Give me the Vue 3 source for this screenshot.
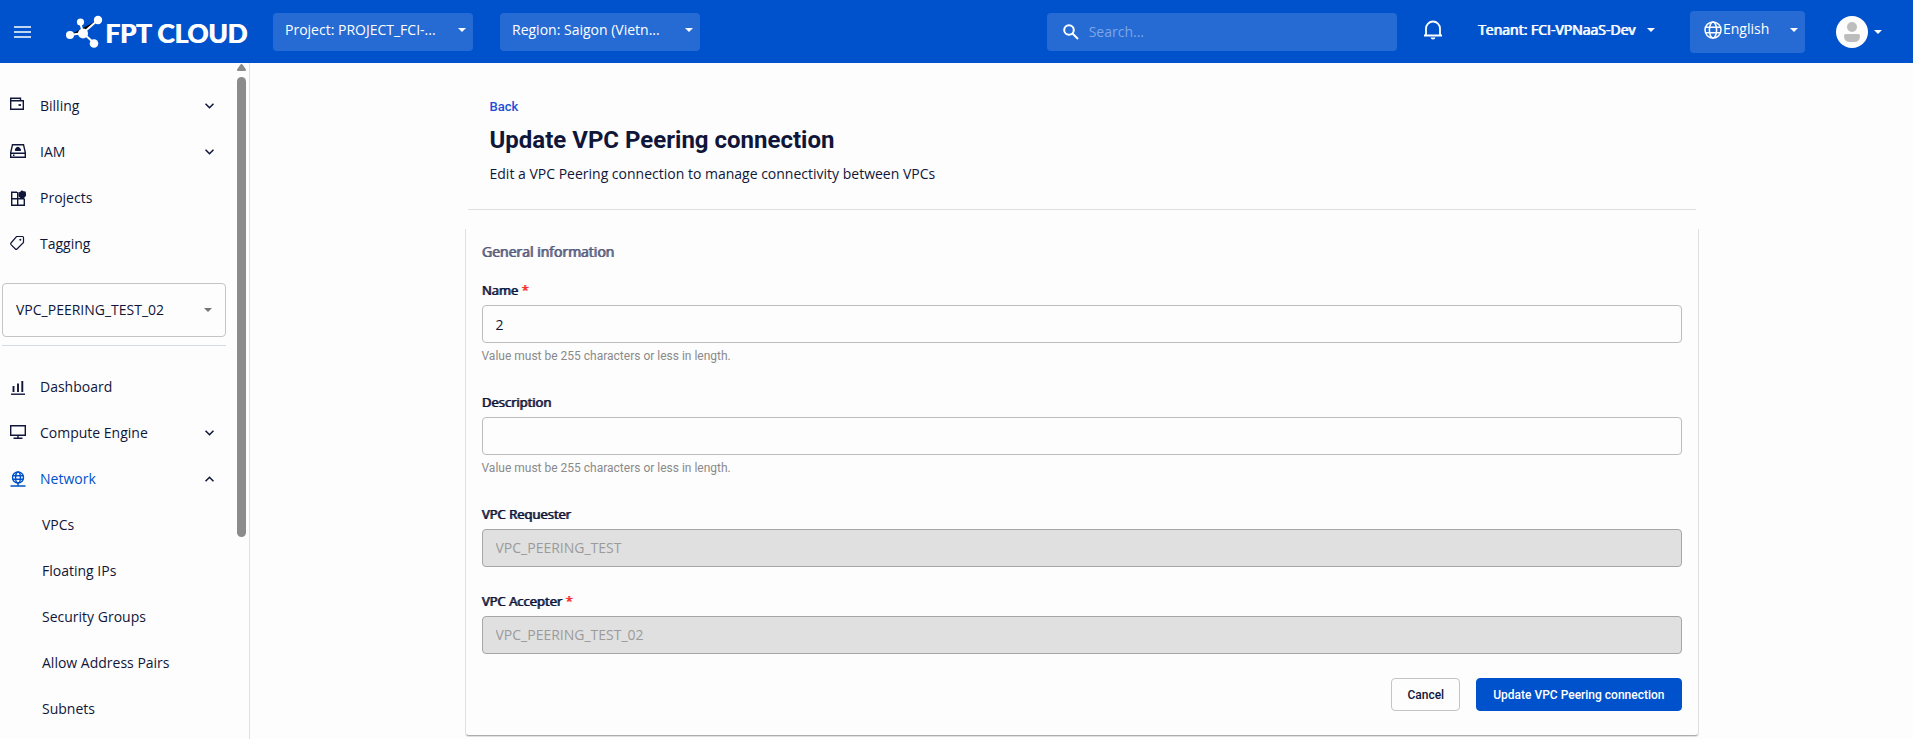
<script setup>
import { ref } from 'vue'

const accountItems = [
  { label: 'Billing', icon: 'wallet', expandable: true },
  { label: 'IAM', icon: 'drive', expandable: true },
  { label: 'Projects', icon: 'grid' },
  { label: 'Tagging', icon: 'tag' }
]
const serviceItems = [
  { label: 'Dashboard', icon: 'chart' },
  { label: 'Compute Engine', icon: 'monitor', expandable: true },
  {
    label: 'Network',
    icon: 'network',
    expandable: true,
    open: true,
    children: ['VPCs', 'Floating IPs', 'Security Groups', 'Allow Address Pairs', 'Subnets']
  }
]
const menus = [accountItems, serviceItems]
const name = ref('2')
const description = ref('')
const keyword = ref('')
</script>

<template>
  <div class="app">
    <header class="topbar">
      <button class="plain burger" type="button" aria-label="Toggle menu">
        <svg width="17" height="12" viewBox="0 0 17 12"><path d="M0 1h17M0 6h17M0 11h17" stroke="#fff" stroke-width="1.7" /></svg>
      </button>
      <a class="logo" href="#">
        <svg width="38" height="34" viewBox="0 0 38 34">
          <path d="M4 20 17 18 32 5M17 18 14 7M17 18l11 10" stroke="#fff" stroke-width="2" />
          <g fill="#fff">
            <circle cx="4" cy="20" r="4" /><circle cx="17" cy="18.500" r="5" /><circle cx="14.500" cy="7" r="3.600" />
            <circle cx="32" cy="5" r="4.200" /><circle cx="28" cy="28.500" r="4.300" />
          </g>
        </svg>
        <span>FPT CLOUD</span>
      </a>
      <div class="picker project">
        <select aria-label="Project"><option>Project: PROJECT_FCI-...</option></select>
        <i class="caret"></i>
      </div>
      <div class="picker region">
        <select aria-label="Region"><option>Region: Saigon (Vietn...</option></select>
        <i class="caret"></i>
      </div>
      <label class="search">
        <svg width="16" height="16" viewBox="0 0 16 16" fill="none" stroke="#fff" stroke-width="2"><circle cx="6" cy="6" r="4.800" /><path d="m9.500 9.500 5.500 5.500" /></svg>
        <input v-model="keyword" type="text" placeholder="Search..." aria-label="Search" />
      </label>
      <button class="plain bell" type="button" aria-label="Notifications">
        <svg width="18" height="20" viewBox="0 0 18 20">
          <path d="M2 15V8.500a7 7 0 0 1 14 0V15M0 15.500h18" fill="none" stroke="#fff" stroke-width="1.800" />
          <path d="M6.500 17.500h5q-.5 2-2.500 2t-2.500-2" fill="#fff" />
        </svg>
      </button>
      <button class="plain tenant" type="button"><span class="strong">Tenant: FCI-VPNaaS-Dev</span><i class="caret"></i></button>
      <div class="picker language">
        <svg width="18" height="18" viewBox="0 0 18 18" fill="none" stroke="#fff" stroke-width="1.500">
          <circle cx="9" cy="9" r="8" /><ellipse cx="9" cy="9" rx="3.600" ry="8" /><path d="M1.500 6.200h15M1.500 11.800h15" />
        </svg>
        <select aria-label="Language"><option>English</option></select>
        <i class="caret"></i>
      </div>
      <button class="plain account" type="button" aria-label="Account">
        <svg width="32" height="32" viewBox="0 0 32 32">
          <circle cx="16" cy="16" r="16" fill="#fdfdfd" />
          <circle cx="16" cy="11" r="5" fill="#bdbdbd" />
          <path d="M8 20a2 2 0 0 1 2-2h12a2 2 0 0 1 2 2q0 6-6 6h-4q-6 0-6-6" fill="#bdbdbd" />
        </svg>
        <i class="caret"></i>
      </button>
    </header>

    <div class="body">
      <aside class="sidebar">
        <nav>
          <template v-for="(items, m) in menus" :key="m">
            <div v-if="m === 1" class="vpc">
              <div class="vpc-box">
                <select aria-label="VPC"><option>VPC_PEERING_TEST_02</option></select>
                <i class="caret"></i>
              </div>
            </div>
            <ul>
              <li v-for="item in items" :key="item.label">
                <a class="item" :class="{ active: item.open }" href="#">
                  <svg class="icon" width="18" height="18" viewBox="0 0 18 18" fill="none" stroke="currentColor" stroke-width="1.400">
                    <template v-if="item.icon === 'wallet'">
                      <path d="M2.700 3.700V1.200h9.800v2.500M2.700 3.700h12.600v8.600H2.700zM2.700 4V1.500" />
                      <path d="M10.500 8h2.500" stroke-width="1.700" />
                    </template>
                    <template v-else-if="item.icon === 'drive'">
                      <path d="M4.500 1.700h11l1.800 8v4.600H2.700v-4.600zM2.700 10.200h14.600" />
                      <path d="M7.500 8a1.500 1.500 0 0 1 0-2.500 2.500 2.500 0 0 1 4.700 0A1.500 1.500 0 0 1 12.500 8z" fill="currentColor" stroke="none" />
                      <path d="M5 12.300h1.500" />
                    </template>
                    <template v-else-if="item.icon === 'grid'">
                      <path d="M9 3.200H3.700v13.100h12.600V10M3.500 9.700h13M9.700 3v13.500" />
                      <path d="m13.800 1.200 1.800 1 2 .2.400 2.200.2 2-1.600 1.800-1.800 1-2.200-.2-2-1.600-.2-2.200.4-2 1.800-.8z" fill="currentColor" stroke="none" />
                    </template>
                    <template v-else-if="item.icon === 'tag'">
                      <path d="M8.500 1.500h6q1 0 1 1v5L9 14q-.8.800-1.600 0L3 9.600q-.8-.8 0-1.600z" stroke-width="1.200" />
                      <circle cx="12.300" cy="4.800" r="1" fill="currentColor" stroke="none" />
                    </template>
                    <template v-else-if="item.icon === 'chart'">
                      <path d="M3 16.200h14" /><path d="M5.500 8v6M10 5.500V14M14.300 3v11" stroke-width="1.900" />
                    </template>
                    <template v-else-if="item.icon === 'monitor'">
                      <path d="M2.700 1.700h14.600v9.600H2.700zM10 11.500V14M5.500 14.300h9" />
                    </template>
                    <template v-else>
                      <circle cx="10" cy="7.500" r="5.500" /><ellipse cx="10" cy="7.500" rx="2.400" ry="5.500" />
                      <path d="M4.500 5.800h11M4.500 9.200h11M10 13v3M2.500 16h15" />
                    </template>
                  </svg>
                  <span>{{ item.label }}</span>
                  <svg v-if="item.expandable" class="chevron" width="9" height="6" viewBox="0 0 9 6" fill="none" stroke="#10163a" stroke-width="1.600">
                    <path :d="item.open ? 'M.5 5.300l4-4 4 4' : 'M.5.700l4 4 4-4'" />
                  </svg>
                </a>
                <ul v-if="item.children">
                  <li v-for="child in item.children" :key="child"><a class="item child" href="#">{{ child }}</a></li>
                </ul>
              </li>
            </ul>
          </template>
        </nav>
        <div class="rail">
          <svg width="9" height="7" viewBox="0 0 9 7"><path d="M4.500 0q.7 0 1.200.8L9 5.500Q9 7 8 7H1Q0 7 0 5.500L3.300.8Q3.800 0 4.500 0" fill="#8b8b8b" /></svg>
          <div class="thumb"></div>
        </div>
      </aside>

      <main>
        <div class="heading">
          <a href="#">Back</a>
          <h1>Update VPC Peering connection</h1>
          <p>Edit a VPC Peering connection to manage connectivity between VPCs</p>
        </div>
        <form class="card" @submit.prevent>
          <h2 class="strong">General information</h2>
          <div class="field">
            <label for="name" class="strong">Name <em>*</em></label>
            <input id="name" v-model="name" type="text" />
            <small>Value must be 255 characters or less in length.</small>
          </div>
          <div class="field">
            <label for="description" class="strong">Description</label>
            <input id="description" v-model="description" type="text" />
            <small>Value must be 255 characters or less in length.</small>
          </div>
          <div class="field">
            <label for="requester" class="strong">VPC Requester</label>
            <input id="requester" type="text" value="VPC_PEERING_TEST" disabled />
          </div>
          <div class="field">
            <label for="accepter" class="strong">VPC Accepter <em>*</em></label>
            <input id="accepter" type="text" value="VPC_PEERING_TEST_02" disabled />
          </div>
          <div class="actions">
            <button type="button">Cancel</button>
            <button type="submit" class="primary">Update VPC Peering connection</button>
          </div>
        </form>
      </main>
    </div>
  </div>
</template>

<style>
body { background: #fdfdfd; }
</style>

<style scoped>
* { box-sizing: border-box; }
.app {
  height: 100vh;
  display: flex;
  flex-direction: column;
  overflow: hidden;
  color: #10163a;
  font: 14px/20px "Open Sans", "Noto Sans", sans-serif;
}
input, select, button { font: inherit; color: inherit; margin: 0; }
select { appearance: none; border: 0; background: transparent; padding: 0; width: 100%; outline: 0; }
option { color: #10163a; }
a { color: inherit; text-decoration: none; }
ul { list-style: none; margin: 0; padding: 0; }
svg { display: block; flex: none; }
.plain { border: 0; background: none; padding: 0; display: flex; align-items: center; }
.strong { font-weight: 400; text-shadow: 1px 0 0 currentColor; }
.caret {
  flex: none;
  border: solid transparent;
  border-width: 4px 4px 0;
  border-top-color: currentColor;
  margin: 0 1px;
}
.topbar {
  flex: none;
  height: 63px;
  display: flex;
  align-items: center;
  background: #0052cc;
  color: #fff;
  padding: 0 30px 0 14px;
}
.logo { display: flex; align-items: center; width: 180px; margin: 0 27px 0 35px; }
.logo span { font: 700 26px/32px Lato, sans-serif; white-space: nowrap; margin-left: 1px; padding-top: 2px; text-shadow: 1px 0 0 currentColor; }
.picker {
  display: flex;
  align-items: center;
  height: 38px;
  width: 200px;
  padding: 0 6px 3px 12px;
  border-radius: 4px;
  background: #266bd3;
}
.region { margin-left: 27px; }
.search {
  margin-left: auto;
  width: 350px;
  height: 38px;
  display: flex;
  align-items: center;
  gap: 10px;
  padding: 0 16px;
  border-radius: 4px;
  background: #266bd3;
}
.search input { flex: 1; border: 0; padding: 0; background: transparent; outline: 0; }
.search input::placeholder { color: #7da6e5; opacity: 1; }
.bell { margin: 0 36px 0 27px; }
.bell svg { margin-bottom: 4px; }
.tenant { gap: 11px; margin-right: 34px; padding-bottom: 3px; white-space: nowrap; }
.language { width: 115px; height: 42px; padding: 0 6px 3px 14px; gap: 1px; }
.language select { padding-bottom: 2px; }
.account { margin-left: 31px; gap: 5px; }
.body { flex: 1; display: flex; min-height: 0; }
.sidebar { flex: none; width: 250px; border-right: 1px solid #e0e0e0; display: flex; overflow: hidden; }
nav { flex: 1; padding-top: 20px; }
.item { display: flex; align-items: center; height: 46px; padding: 0 23px 0 8px; }
.icon { margin-right: 14px; }
.chevron { margin-left: auto; }
.active { color: #0052cc; }
.child { padding-left: 42px; }
.vpc { margin: 16px 11px 18px 2px; padding-bottom: 8px; border-bottom: 1px solid #d5dae5; }
.vpc-box {
  display: flex;
  align-items: center;
  height: 54px;
  padding: 0 12px 0 13px;
  border: 1px solid #c4c4c4;
  border-radius: 4px;
}
.vpc-box .caret { color: #757575; }
.rail { flex: none; width: 12px; padding-top: 1px; }
.thumb { width: 9px; height: 460px; margin-top: 6px; border-radius: 5px; background: #8b8b8b; }
main { flex: 1; min-width: 0; padding: 32px 24px 0; }
.heading, .card { max-width: 1234px; margin: 0 auto; }
.heading {
  max-width: 1228px;
  padding: 0 22px 24px;
  border-bottom: 1px solid #e0e0e0;
}
.heading a { display: block; width: max-content; color: #1d4ed8; font: 500 13px/24px Roboto, sans-serif; }
h1 { margin: 5px 0 7px; font: 700 24px/32px Roboto, sans-serif; }
.heading p { margin: 0; line-height: 22px; }
.card {
  margin-top: 19px;
  padding: 13px 16px 24px;
  border: solid #e0e0e0;
  border-width: 0 1px 1px;
  border-bottom-color: #adadad;
  border-radius: 0 0 4px 4px;
  box-shadow: 0 1px 0 #e0e0e0;
}
h2 { margin: 0 0 18px; font-size: 14px; line-height: 20px; color: #5b5d80; }
.field { margin-bottom: 24px; display: flex; flex-direction: column; }
.field label { font-size: 13px; align-self: flex-start; margin-bottom: 5px; }
.field em { color: #f52929; font-style: normal; }
.field input {
  width: 100%;
  height: 38px;
  padding: 0 13px;
  border: 1px solid #bdbdbd;
  border-radius: 4px;
  background: transparent;
}
.field input:disabled { padding-bottom: 2px; background: #e0e0e0; border-color: #a6a6a6; color: #9b9b9b; }
.field small { margin: 4px 0 3px; font: 400 12px/18px Roboto, sans-serif; color: #8a8a8a; }
.actions { display: flex; justify-content: flex-end; gap: 16px; }
.actions button {
  height: 33px;
  padding: 0 15px;
  border: 1px solid #c4c4c4;
  border-radius: 4px;
  background: #fdfdfd;
  font: 500 12px/20px Roboto, sans-serif;
}
.actions .primary { padding: 0 16px; border-color: #0052cc; background: #0052cc; color: #fff; }
</style>
